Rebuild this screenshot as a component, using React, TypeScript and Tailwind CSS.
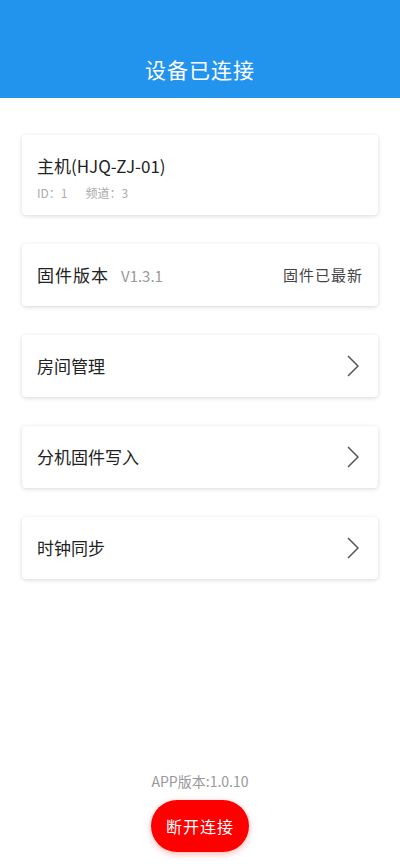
const font = { fontFamily: '"Noto Sans CJK SC", "Noto Sans", sans-serif' };

//======================================Card
const Card = ({ children, className = '' }: { children: React.ReactNode; className?: string }) => (
  <div
    className={
      'mx-[22px] rounded-[4px] bg-white shadow-[0_1px_4px_rgba(0,0,0,0.16)] ' + className
    }
  >
    {children}
  </div>
);

const Chevron = () => (
  <svg width="12" height="22" viewBox="0 0 12 22" fill="none" className="text-[#555]">
    <polyline points="1,1 11,11 1,21" stroke="currentColor" strokeWidth="1.5" strokeLinejoin="miter" />
  </svg>
);

const NavRow = ({ label }: { label: string }) => (
  <Card className="flex h-[62px] items-center justify-between pl-[15px] pr-[19px]">
    <span className="text-[17px] text-[#222]">{label}</span>
    <Chevron />
  </Card>
);

export default function App() {
  return (
    <div className="flex min-h-screen flex-col bg-white" style={font}>
      {/* header */}
      <div className="flex h-[98px] items-end justify-center bg-[#2294ee] pb-[15px]">
        <span className="text-[21px] leading-[28px] tracking-[1px] text-white">设备已连接</span>
      </div>

      <div className="mt-[37px] flex flex-col gap-[29px]">
        <Card className="h-[80px] px-[15px] pt-[19px]">
          <div className="text-[17px] leading-[24px] text-[#222]">主机(HJQ-ZJ-01)</div>
          <div className="mt-[7px] flex gap-[18px] text-[12px] leading-[16px] text-[#aaa]">
            <span>ID：1</span>
            <span>频道：3</span>
          </div>
        </Card>

        <Card className="flex h-[62px] items-center justify-between px-[15px]">
          <div className="flex items-baseline gap-[12px]">
            <span className="text-[17px] tracking-[1px] text-[#222]">固件版本</span>
            <span className="text-[15px] text-[#999]">V1.3.1</span>
          </div>
          <span className="text-[15px] tracking-[1px] text-[#444]">固件已最新</span>
        </Card>

        <NavRow label="房间管理" />
        <NavRow label="分机固件写入" />
        <NavRow label="时钟同步" />
      </div>

      <div className="flex-1" />

      {/* footer */}
      <div className="flex flex-col items-center pb-[14px]">
        <span className="text-[14px] leading-[18px] text-[#999]">APP版本:1.0.10</span>
        <button className="mt-[10px] h-[52px] w-[98px] rounded-[26px] bg-[#ff0000] text-[16px] tracking-[1px] text-white shadow-[0_2px_6px_rgba(255,0,0,0.3)]">
          断开连接
        </button>
      </div>
    </div>
  );
}
